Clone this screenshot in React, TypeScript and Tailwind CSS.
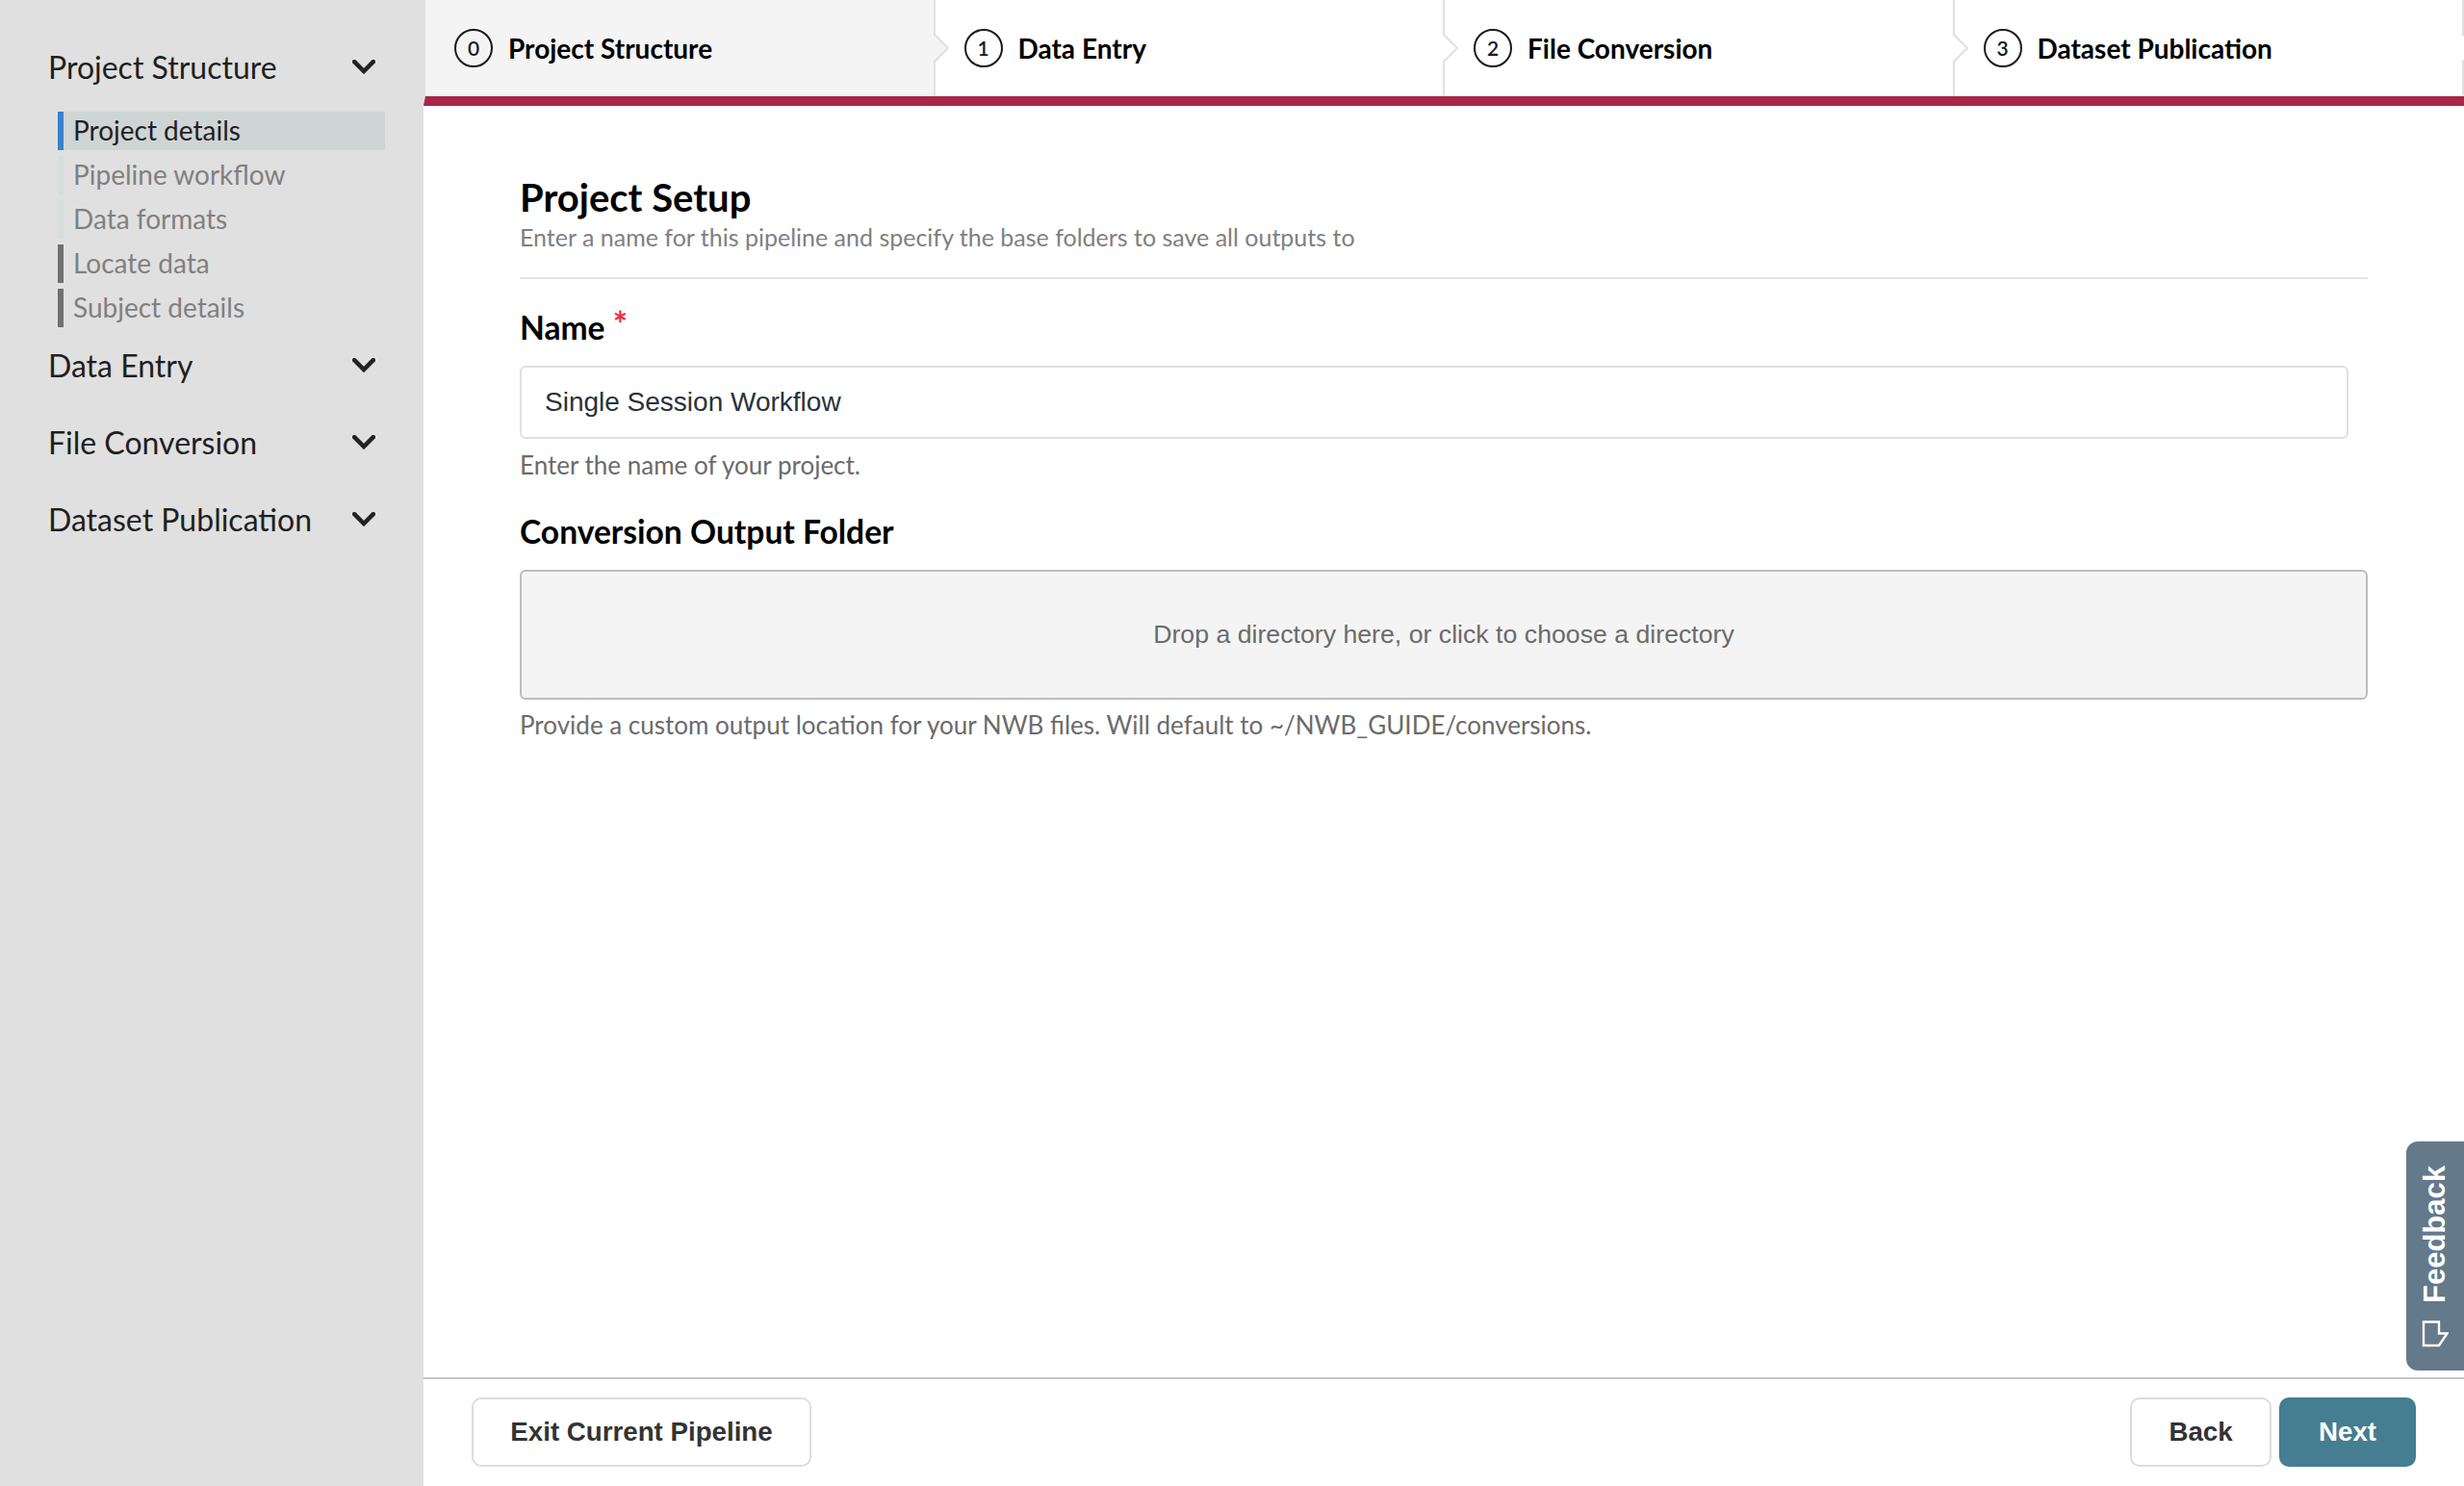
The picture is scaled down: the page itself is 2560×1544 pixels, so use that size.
const steps = ["Project Structure", "Data Entry", "File Conversion", "Dataset Publication"];
const subs = [
  { t: "Project details", bar: "bg-[#3a80cb]", row: "bg-[#cfd5d5] text-[#1f1f1f]" },
  { t: "Pipeline workflow", bar: "bg-[#d8dddd]", row: "text-[#808080]" },
  { t: "Data formats", bar: "bg-[#d8dddd]", row: "text-[#808080]" },
  { t: "Locate data", bar: "bg-[#707070]", row: "text-[#808080]" },
  { t: "Subject details", bar: "bg-[#707070]", row: "text-[#808080]" },
];

function Chevron() {
  return (
    <svg width="24" height="15" viewBox="0 0 24 15" className="shrink-0" fill="none">
      <path d="M2.2 2.2 L12 12 L21.8 2.2" stroke="#222222" strokeWidth="4.5" strokeLinecap="round" strokeLinejoin="miter" />
    </svg>
  );
}

function Heading({ label }: { label: string }) {
  return (
    <div className="flex h-[80px] items-center justify-between px-[50px] pb-[3px] text-[32px] text-[#1f1f1f]">
      <span>{label}</span>
      <Chevron />
    </div>
  );
}

function Step({ n, label, active }: { n: number; label: string; active: boolean }) {
  return (
    <div className={`relative flex flex-1 items-center pl-[30px] ${active ? "bg-[#f4f4f4]" : "bg-white"}`}>
      <div className="flex h-[40px] w-[40px] shrink-0 items-center justify-center rounded-full border-2 border-[#1a1a1a] text-[21px] font-semibold text-[#1a1a1a]">
        {n}
      </div>
      <span className="ml-[16px] text-[28px] font-bold text-black">{label}</span>
      <svg width="18" height="100" viewBox="0 0 18 100" className="absolute left-full top-0 z-10 -ml-[2px]" fill="none">
        <path d="M1 36 L15 50 L1 64 Z" fill={active ? "#f4f4f4" : "#ffffff"} />
        <path d="M1 0 L1 36 L15 50 L1 64 L1 100" stroke="#e0e0e0" strokeWidth="2" />
      </svg>
    </div>
  );
}

export default function App() {
  return (
    <div className="flex h-screen w-full overflow-hidden bg-white font-['Lato',sans-serif]">
      <aside className="w-[440px] shrink-0 bg-[#e0e0e0] pt-[31px]">
        <Heading label="Project Structure" />
        <div className="mb-[1px] mt-[5px] flex flex-col gap-[6px] pl-[60px] pr-[40px]">
          {subs.map((s) => (
            <div key={s.t} className={`flex h-[40px] items-center text-[28px] ${s.row}`}>
              <div className={`h-full w-[6px] ${s.bar}`} />
              <span className="ml-[10px] pb-[2px]">{s.t}</span>
            </div>
          ))}
        </div>
        <Heading label="Data Entry" />
        <Heading label="File Conversion" />
        <Heading label="Dataset Publication" />
      </aside>

      <main className="relative flex min-w-0 flex-1 flex-col">
        <nav className="flex h-[110px] shrink-0 overflow-hidden border-b-[10px] border-l-2 border-b-[#a92549] border-l-[#e0e0e0]">
          {steps.map((s, i) => (
            <Step key={s} n={i} label={s} active={i === 0} />
          ))}
        </nav>

        <section className="flex-1 px-[100px] pt-[70px]">
          <h1 className="text-[40px] font-bold leading-[50px] text-black">Project Setup</h1>
          <p className="mt-[1px] text-[25px] leading-[30px] text-[#808080]">
            Enter a name for this pipeline and specify the base folders to save all outputs to
          </p>
          <div className="mt-[27px] h-[2px] bg-[#e4e4e4]" />

          <div className="mt-[28px] text-[33.6px] font-bold leading-[44px] text-black">
            Name <span className="relative -top-[3px] text-[36px] font-bold leading-[0] text-[#ee2a3c]">*</span>
          </div>
          <div className="mr-[20px] mt-[18px] flex h-[76px] items-center rounded-[6px] border-2 border-[#e0e0e0] bg-white pl-[24px] font-['Liberation_Sans',sans-serif] text-[28px] text-[#28323c]">
            Single Session Workflow
          </div>
          <p className="mt-[11px] text-[26px] leading-[32px] text-[#6b6b6b]">Enter the name of your project.</p>

          <div className="mt-[31px] text-[33.6px] font-bold leading-[44px] text-black">Conversion Output Folder</div>
          <div className="mt-[18px] flex h-[135px] items-center justify-center rounded-[6px] border-2 border-[#bdbdbd] bg-[#f4f4f4] font-['Liberation_Sans',sans-serif] text-[26.7px] text-[#6b6b6b]">
            Drop a directory here, or click to choose a directory
          </div>
          <p className="mt-[10px] text-[26px] leading-[32px] text-[#6b6b6b]">
            Provide a custom output location for your NWB files. Will default to ~/NWB_GUIDE/conversions.
          </p>
        </section>

        <footer className="flex h-[113px] shrink-0 items-start justify-between border-t-2 border-t-[#c6c6c6] px-[50px] pt-[19px] font-['Liberation_Sans',sans-serif] text-[27.7px] font-bold">
          <button className="h-[72px] w-[353px] rounded-[10px] border-2 border-[#dcdcdc] bg-white text-[#333333]">
            Exit Current Pipeline
          </button>
          <div className="flex gap-[8px]">
            <button className="h-[72px] w-[147px] rounded-[10px] border-2 border-[#dcdcdc] bg-white text-[#333333]">Back</button>
            <button className="h-[72px] w-[142px] rounded-[10px] bg-[#447e90] text-white">Next</button>
          </div>
        </footer>

        <div className="absolute bottom-[120px] right-0 flex h-[238px] w-[60px] flex-col items-center justify-end rounded-l-[12px] bg-[#64798a] pb-[24px] font-['Liberation_Sans',sans-serif] text-white">
          <span className="rotate-180 text-[31px] font-bold leading-[32px] [writing-mode:vertical-rl]">Feedback</span>
          <svg width="28" height="28" viewBox="0 0 28 28" className="mt-[18px]" fill="none">
            <path d="M2 1.5 H18 V13.5 H26.5 L18 26 H2 Z" stroke="#ffffff" strokeWidth="2.4" />
          </svg>
        </div>
      </main>
    </div>
  );
}
